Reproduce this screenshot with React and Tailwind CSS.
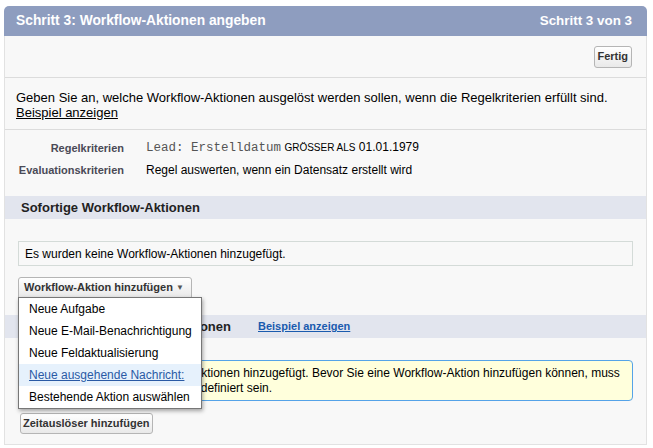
import { useState } from "react";

const menuItems = [
  "Neue Aufgabe",
  "Neue E-Mail-Benachrichtigung",
  "Neue Feldaktualisierung",
  "Neue ausgehende Nachricht:",
  "Bestehende Aktion auswählen",
];

function GrayButton({ children, className = "" }) {
  return (
    <button
      className={`border border-[#b5b5b5] rounded-[3px] bg-gradient-to-b from-white to-[#e9e9e9] text-[11px] font-bold text-[#333] leading-none whitespace-nowrap ${className}`}
    >
      {children}
    </button>
  );
}

export default function App() {
  const [hover] = useState(3);

  return (
    <div
      className="pl-[4px] pt-[6px] bg-white h-[448px]"
      style={{ fontFamily: '"Liberation Sans", Arial, sans-serif' }}
    >
      <div className="w-[643px]">
        {/* Header */}
        <div className="h-[30px] bg-[#8e9dbf] rounded-t-[5px] flex items-center justify-between pl-[12px] pr-[15px] text-white font-bold">
          <span className="text-[13.8px]">Schritt 3: Workflow-Aktionen angeben</span>
          <span className="text-[13.4px]">Schritt 3 von 3</span>
        </div>

        <div className="bg-[#f8f8f8] border-x border-b border-[#e2e2e2] pb-[10px]">
          {/* Fertig row */}
          <div className="h-[42px] flex items-center justify-end pr-[14px] border-b border-[#dcdcdc]">
            <GrayButton className="h-[22px] pl-[2px] pr-[3px]">Fertig</GrayButton>
          </div>

          {/* Intro */}
          <div className="pt-[12px] pb-[9px] pl-[11px] text-[13px] leading-[15px] text-black border-b border-[#dcdcdc]">
            <p>
              Geben Sie an, welche Workflow-Aktionen ausgelöst werden sollen, wenn die Regelkriterien erfüllt sind.
            </p>
            <a href="#" className="underline text-black">
              Beispiel anzeigen
            </a>
          </div>

          {/* Criteria */}
          <div className="pt-[7px] pb-[15px]">
            <div className="flex items-center h-[22px]">
              <div className="w-[119px] text-right text-[11px] font-bold text-[#4a4a56]">Regelkriterien</div>
              <div className="pl-[22px] text-[12px] text-black whitespace-nowrap">
                <span className="text-[12.5px] text-[#555]" style={{ fontFamily: '"Liberation Mono", "Courier New", monospace' }}>
                  Lead: Erstelldatum
                </span>{" "}
                <span className="text-[10px]">GRÖSSER ALS</span> 01.01.1979
              </div>
            </div>
            <div className="flex items-center h-[22px]">
              <div className="w-[119px] text-right text-[11px] font-bold text-[#4a4a56]">Evaluationskriterien</div>
              <div className="pl-[22px] text-[12px] text-black">
                Regel auswerten, wenn ein Datensatz erstellt wird
              </div>
            </div>
          </div>

          {/* Sofortige */}
          <div className="h-[23px] bg-[#e2e5ee] flex items-center pl-[16px] text-[13px] font-bold text-[#222]">
            Sofortige Workflow-Aktionen
          </div>

          <div className="mx-[13px] mt-[22px] h-[25px] border border-[#d4dbd8] flex items-center pl-[6px] text-[12px] text-black">
            Es wurden keine Workflow-Aktionen hinzugefügt.
          </div>

          <div className="relative ml-[13px] mt-[11px] w-max z-10">
            <GrayButton className="h-[21px] w-[174px] pl-[5px] pr-[7px] flex items-center justify-between rounded-b-none">
              Workflow-Aktion hinzufügen
              <span className="text-[8px] text-[#555]">▼</span>
            </GrayButton>
            <div className="absolute left-0 top-[20px] w-[184px] bg-white border border-[#777] shadow-[1px_2px_4px_rgba(0,0,0,0.35)]">
              {menuItems.map((item, i) =>
                i === hover ? (
                  <div key={item} className="h-[22px] flex items-center pl-[10px] bg-[#e6f1fc] text-[12px] whitespace-nowrap">
                    <a href="#" className="underline text-[#2a5aa5]">
                      {item}
                    </a>
                  </div>
                ) : (
                  <div key={item} className="h-[22px] flex items-center pl-[10px] text-[12px] text-black whitespace-nowrap">
                    {item}
                  </div>
                )
              )}
            </div>
          </div>

          {/* Zeitabhängige */}
          <div className="mt-[17px] h-[23px] bg-[#e2e5ee] flex items-center pl-[16px]">
            <span className="w-[237px] text-[13px] font-bold text-[#222] whitespace-nowrap">
              Zeitabhängige Workflow-Aktionen
            </span>
            <a href="#" className="text-[11px] font-bold underline text-[#1a5bae]">
              Beispiel anzeigen
            </a>
          </div>

          <div className="mx-[13px] mt-[22px] h-[41px] bg-[#ffffdc] border border-[#55a3e8] rounded-[4px] flex items-center">
            <div className="w-[29px] flex justify-center">
              <span className="w-[16px] h-[16px] rounded-full bg-[#1f7fd6] text-white text-[11px] font-bold flex items-center justify-center">
                i
              </span>
            </div>
            <p className="text-[12px] leading-[15px] text-black whitespace-nowrap">
              Es wurden keine Workflow-Aktionen hinzugefügt. Bevor Sie eine Workflow-Aktion hinzufügen können, muss
              <br />
              mindestens ein Zeitauslöser definiert sein.
            </p>
          </div>

          <GrayButton className="ml-[15px] mt-[12px] h-[21px] px-[2px]">Zeitauslöser hinzufügen</GrayButton>
        </div>
      </div>
    </div>
  );
}
